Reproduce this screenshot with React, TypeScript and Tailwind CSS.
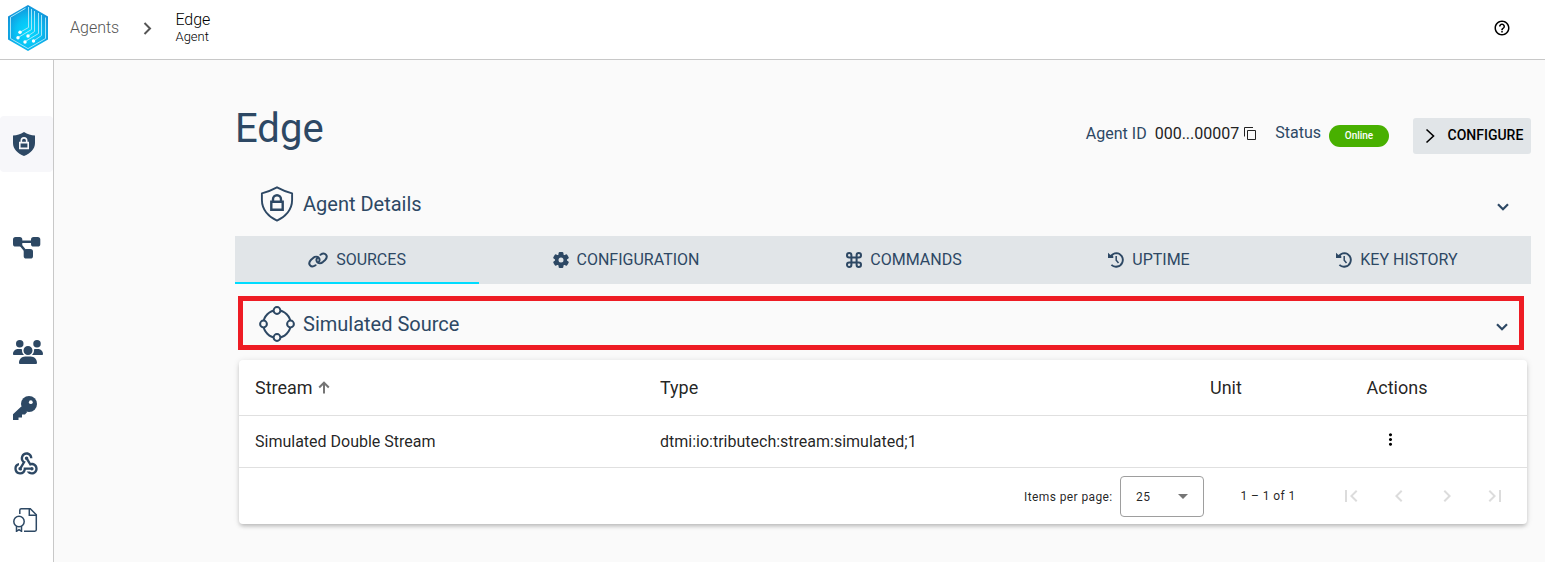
import type { ReactNode } from "react";
import { FaUsers } from "react-icons/fa6";
import {
  MdWebhook,
  MdHelpOutline,
  MdMoreVert,
  MdFirstPage,
  MdLastPage,
  MdChevronLeft,
  MdChevronRight,
  MdArrowDropDown,
} from "react-icons/md";

function Logo() {
  return (
    <svg width="40" height="46" viewBox="0 0 40 46" fill="none">
      <defs>
        <radialGradient id="logo-fill" cx="0.5" cy="0.6" r="0.6">
          <stop offset="0" stopColor="#05dcff" />
          <stop offset="0.5" stopColor="#08c2f5" />
          <stop offset="1" stopColor="#1590d6" />
        </radialGradient>
      </defs>
      <path d="M20 0 40 11.500v23L20 46 0 34.500v-23z" fill="url(#logo-fill)" />
      <g stroke="#a4e6fa" strokeWidth="1">
        <path d="M17.500 3.300 2.500 12.200v21.300L20 43.600l17.500-10.100" />
        <path d="M20.500 2v20.500l-8.500 4.800M23.500 4v20.500l-13 7.800M26.500 6v20.500L20 31M30.500 8v20.500l-13.200 8M33.500 10v20.500L25.500 36M37.500 12.500v21" />
      </g>
      <g fill="#fff">
        <circle cx="12" cy="27.300" r="1.700" />
        <circle cx="10" cy="32.700" r="1.700" />
        <circle cx="20" cy="31" r="1.700" />
        <circle cx="17" cy="37" r="1.700" />
        <circle cx="25.500" cy="36" r="1.700" />
      </g>
    </svg>
  );
}

function Chevron({ className }: { className?: string }) {
  return (
    <svg width="12" height="8" viewBox="0 0 12 8" className={className} fill="none" stroke="#2d4864" strokeWidth="2.200">
      <path d="M1 1.200 6 6.200 11 1.200" />
    </svg>
  );
}

function ShieldSolid() {
  return (
    <svg width="22" height="24" viewBox="0 0 22 24" fill="none">
      <path d="M11 0C14.500 2.300 18 3.300 22 3.600V11c0 6-4.500 10.500-11 13C4.500 21.500 0 17 0 11V3.600C4 3.300 7.500 2.300 11 0z" fill="#2d4864" />
      <path d="M6.800 10.600h8.400v5.800H6.800z" stroke="#f7f7fa" strokeWidth="1.600" />
      <path d="M8.300 10.200V8.600a2.700 2.700 0 0 1 5.400 0v1.600" stroke="#f7f7fa" strokeWidth="1.600" />
    </svg>
  );
}

function Nodes() {
  return (
    <svg width="28" height="22" viewBox="0 0 28 22" fill="#2d4864">
      <rect x="0" y="0" width="9.300" height="9.500" rx="2.600" />
      <rect x="18" y="0" width="9.300" height="9.500" rx="2.600" />
      <rect x="10.700" y="12" width="9.300" height="9.500" rx="2.600" />
      <path d="M5 4.800h18M6 6l8 10" stroke="#2d4864" strokeWidth="2.400" />
    </svg>
  );
}

function Key() {
  return (
    <svg width="24" height="24" viewBox="0 0 24 24" fill="#2d4864">
      <path d="M8.300 10.500 0 18.300V24h5.500v-2.500H9v-3h3l2.200-2.500z" />
      <circle cx="16" cy="8" r="8" />
      <circle cx="17.800" cy="6.200" r="1.900" fill="#fff" />
    </svg>
  );
}

function Certificate() {
  return (
    <svg width="25" height="24" viewBox="0 0 25 24" fill="none" stroke="#2d4864" strokeWidth="1.500">
      <path d="M6.800 6V2.200Q6.800.8 8.200.8H17.300L23.300 6.800V21.800Q23.300 23.200 21.900 23.200H11" />
      <path d="M16.300 1v6.300h6.800" />
      <circle cx="6" cy="13.500" r="5.200" />
      <path d="M3.500 18v5.300L6 21.600 8.500 23.300V18" />
    </svg>
  );
}

function ShieldOutline() {
  return (
    <svg width="34" height="36" viewBox="0 0 34 36" fill="none" stroke="#2d4864" strokeWidth="1.900">
      <path d="M17 1.300C22 4 26.500 5.800 32.100 7.300V14C32.100 23.500 25.500 31 17 34.600 8.500 31 1.900 23.500 1.900 14V7.300C7.500 5.800 12 4 17 1.300z" strokeLinejoin="round" />
      <path d="M11.300 15.800h11.400v8H11.300z" strokeWidth="2.400" />
      <path d="M13 15.500v-2.300a4 4 0 0 1 8 0v2.300" strokeWidth="2.400" />
    </svg>
  );
}

function RingNodes() {
  return (
    <svg width="36" height="36" viewBox="0 0 36 36" fill="none" stroke="#2d4864" strokeWidth="2" className="mt-0.5">
      <circle cx="18" cy="18" r="13.700" />
      <g fill="#fafafa">
        <circle cx="18" cy="4.500" r="3.400" />
        <circle cx="31.500" cy="18" r="3.400" />
        <circle cx="18" cy="31.500" r="3.400" />
        <circle cx="4.500" cy="18" r="3.400" />
      </g>
    </svg>
  );
}

function Copy() {
  return (
    <svg width="12" height="13" viewBox="0 0 12 13" className="mt-[67px] ml-[5px]" fill="none" stroke="#222" strokeWidth="1">
      <path d="M.5 9.500V.5H9" />
      <path d="M3.500 3.500h8v9h-8z" />
    </svg>
  );
}

function LinkIcon() {
  return (
    <svg width="20" height="16" viewBox="0 0 20 16" fill="none" stroke="#2d4864" strokeWidth="2" strokeLinecap="round">
      <path d="M7.500 13.200C5.700 14.500 3.300 14.700 2.100 13.300.9 11.900 1.300 9.500 3.100 7.700L5.200 5.900C7 4.500 9.600 4.400 10.800 5.900 11.900 7.300 11.600 9.100 10.500 10.400" />
      <path d="M12.500 2.800C14.300 1.500 16.700 1.300 17.900 2.700 19.100 4.100 18.700 6.500 16.900 8.300L14.800 10.100C13 11.500 10.400 11.600 9.200 10.100 8.100 8.700 8.400 6.900 9.500 5.600" />
    </svg>
  );
}

function Cog() {
  return (
    <svg width="16" height="16" viewBox="0 0 16 16">
      <g fill="#2d4864">
        <rect x="5.600" y="0" width="4.800" height="16" rx="1.200" />
        <rect x="5.600" y="0" width="4.800" height="16" rx="1.200" transform="rotate(60 8 8)" />
        <rect x="5.600" y="0" width="4.800" height="16" rx="1.200" transform="rotate(120 8 8)" />
        <circle cx="8" cy="8" r="6.100" />
      </g>
      <circle cx="8" cy="8" r="2.500" fill="#e1e5e8" />
    </svg>
  );
}

function Command() {
  return (
    <svg width="16" height="16" viewBox="0 0 16 16" fill="none" stroke="#2d4864" strokeWidth="2">
      <path d="M5.400 10.600V3.200A2.200 2.200 0 1 0 3.200 5.400H12.800A2.200 2.200 0 1 0 10.600 3.200V12.800A2.200 2.200 0 1 0 12.800 10.600H3.200A2.200 2.200 0 1 0 5.400 12.800z" />
    </svg>
  );
}

function History() {
  return (
    <svg width="16" height="16" viewBox="0 0 16 16" fill="none" stroke="#2d4864" strokeWidth="1.900">
      <path d="M2.800 4.400C4.200 2.300 6.200 1.100 8.400 1.100A6.800 6.800 0 1 1 3.400 12.900" />
      <path d="M8.200 4v4.300l2.300 2.600" strokeWidth="1.500" />
      <path d="M0 .8 1.900 2.600 5.300 4.300 5.300 6H0z" fill="#2d4864" stroke="none" />
    </svg>
  );
}

const navItems: { icon: ReactNode; className: string }[] = [
  { icon: <ShieldSolid />, className: "mt-14 rounded bg-[#f7f7fa] pl-[13px]" },
  { icon: <Nodes />, className: "mt-12 pl-[13px]" },
  { icon: <FaUsers size={30} />, className: "mt-12 pl-[13px]" },
  { icon: <Key />, className: "pl-[13px]" },
  { icon: <MdWebhook size={28} />, className: "pl-3" },
  { icon: <Certificate />, className: "pl-[13px]" },
];

const tabs: { label: string; icon: ReactNode; className: string }[] = [
  { label: "SOURCES", icon: <LinkIcon />, className: "w-[244px] border-b-2 border-[#00dcff] pt-0.5" },
  { label: "CONFIGURATION", icon: <Cog />, className: "w-[294px]" },
  { label: "COMMANDS", icon: <Command />, className: "w-[262px]" },
  { label: "UPTIME", icon: <History />, className: "w-[228px]" },
  { label: "KEY HISTORY", icon: <History />, className: "w-[268px]" },
];

export default function App() {
  return (
    <div className="flex h-[562px] w-[1545px] flex-col overflow-hidden bg-[#fafafa] font-['Roboto',sans-serif] text-[#2d4864]">
      <header className="flex h-[60px] shrink-0 items-start border-b border-[#c8c8c8] bg-white text-black">
        <div className="pt-[5px] pl-2">
          <Logo />
        </div>
        <span className="w-[73px] pt-4 pl-[22px] text-base leading-6 font-light text-[#555]">Agents</span>
        <svg width="10" height="13" viewBox="0 0 10 13" className="mt-[22px] ml-[22px]" fill="none" stroke="#555" strokeWidth="2">
          <path d="M1.500 1 7 6.500 1.500 12" />
        </svg>
        <div className="ml-[22.500px] pt-2.5 font-light">
          <div className="text-base leading-[19px] tracking-[-0.1px]">Edge</div>
          <div className="text-[13px] leading-4">Agent</div>
        </div>
        <MdHelpOutline size={18} className="mt-[19px] mr-[34px] ml-auto" />
      </header>

      <div className="flex min-h-0 flex-1">
        <nav className="w-[54px] shrink-0 border-r border-[#c8c8c8] bg-white">
          {navItems.map((item, i) => (
            <div key={i} className={`flex h-14 items-center ${item.className}`}>
              {item.icon}
            </div>
          ))}
        </nav>

        <main className="w-[1477px] pl-[181px]">
          <div className="flex h-28 items-start">
            <h1 className="pt-[45px] text-[40px] leading-[48px]">Edge</h1>
            <div className="ml-auto flex items-start text-base leading-6">
              <span className="pt-[62px]">Agent ID</span>
              <span className="ml-2 pt-[62px] text-[#222]">000...00007</span>
              <Copy />
              <span className="ml-[19px] pt-[61px]">Status</span>
              <span className="mt-[65px] ml-2 flex h-[22px] w-[60px] items-center justify-center rounded-full bg-[#48b000] text-[10px] font-medium text-white">
                Online
              </span>
              <button className="mt-[58px] ml-6 flex h-9 w-[118px] items-center rounded-[3px] bg-[#e1e5e8] pl-3 text-sm font-medium text-black">
                <svg width="10" height="16" viewBox="0 0 10 16" fill="none" stroke="#000" strokeWidth="1.600">
                  <path d="M1.500 1.500 8.500 8 1.500 14.500" />
                </svg>
                <span className="ml-[12.500px] pb-0.5">CONFIGURE</span>
              </button>
            </div>
          </div>

          <section className="flex h-16 items-center pl-[25px] text-xl">
            <ShieldOutline />
            <span className="ml-[9px]">Agent Details</span>
            <Chevron className="mt-1.5 mr-[22px] ml-auto" />
          </section>

          <div className="flex h-12 bg-[#e1e5e8]">
            {tabs.map((tab) => (
              <div key={tab.label} className={`flex items-center justify-center gap-2 text-base font-normal ${tab.className}`}>
                {tab.icon}
                <span>{tab.label}</span>
              </div>
            ))}
          </div>

          <section className="mt-3 ml-[3px] flex h-[54px] w-[1286px] items-center border-[5px] border-[#ee1c24] pl-4 text-xl">
            <RingNodes />
            <span className="ml-2 pt-0.5">Simulated Source</span>
            <Chevron className="mt-2 mr-[11px] ml-auto" />
          </section>

          <div className="mt-2.5 ml-1 h-[164px] w-[1288px] rounded bg-white text-base text-black/87 shadow-[0_3px_4px_-1px_rgba(0,0,0,0.2),0_1px_6px_rgba(0,0,0,0.12)]">
            <div className="flex h-14 items-center border-b border-[#e0e0e0] pl-4 text-lg">
              <div className="flex w-[405px] items-center">
                Stream
                <svg width="12" height="13" viewBox="0 0 12 13" className="ml-[5px]" fill="none" stroke="#757575" strokeWidth="2">
                  <path d="M6 12.500V2M1.200 6.500 6 1.700 10.800 6.500" />
                </svg>
              </div>
              <div className="w-[550px]">Type</div>
              <div className="w-[156.500px]">Unit</div>
              <div>Actions</div>
            </div>
            <div className="flex h-[52px] items-center border-b border-[#e0e0e0] pl-4">
              <div className="w-[405px]">Simulated Double Stream</div>
              <div className="w-[721px]">dtmi:io:tributech:stream:simulated;1</div>
              <MdMoreVert size={19} className="mb-1 text-black" />
            </div>
            <div className="flex h-14 items-center text-xs tracking-[0.4px]">
              <span className="ml-[785px] w-[89px] pt-px">Items per page:</span>
              <div className="ml-[7px] flex h-[41px] w-[84px] items-center rounded border border-[#9e9e9e] pl-[15px]">
                <span className="pt-px">25</span>
                <MdArrowDropDown size={24} className="ml-auto mr-2 text-[#757575]" />
              </div>
              <span className="ml-[36.500px] w-[98.500px]">1 – 1 of 1</span>
              <div className="flex gap-6 text-[#dcdcdc]">
                <MdFirstPage size={24} />
                <MdChevronLeft size={24} />
                <MdChevronRight size={24} />
                <MdLastPage size={24} />
              </div>
            </div>
          </div>
        </main>
      </div>
    </div>
  );
}
